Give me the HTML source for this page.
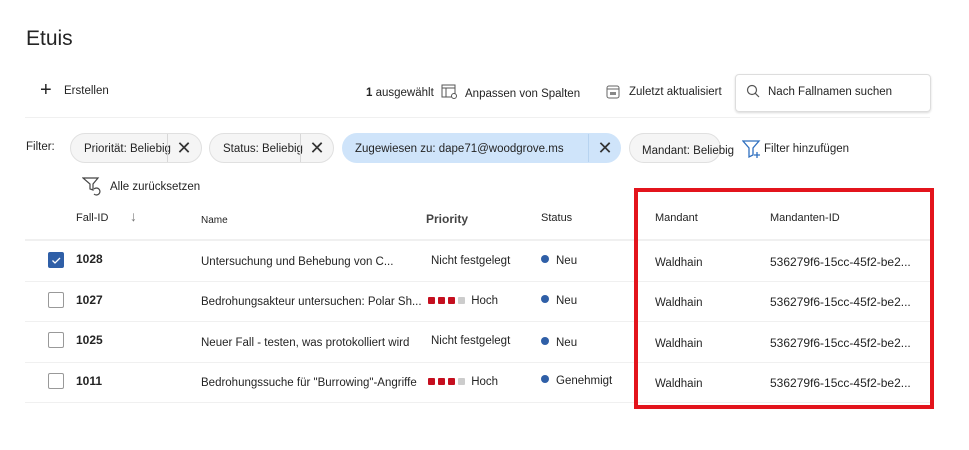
<!DOCTYPE html>
<html><head><meta charset="utf-8"><style>
body{margin:0;width:969px;height:450px;background:#fff;font-family:"Liberation Sans",sans-serif;color:#242424;position:relative;overflow:hidden}
.a{position:absolute;white-space:nowrap}
.t{font-size:11.5px}
.chip{position:absolute;height:30px;top:133px;border:1px solid #e0e0e0;background:#f5f5f5;border-radius:15px;font-size:11.5px;box-sizing:border-box;line-height:30px;white-space:nowrap}
.x{position:absolute;top:0;height:28px;border-left:1px solid #d8d8d8;width:32px;text-align:center;font-size:18px;line-height:28px;color:#333}
.line{position:absolute;left:25px;width:905px;height:1px;background:#f0f0f0}
.cb{position:absolute;left:48px;width:14px;height:14px;border:1px solid #999;border-radius:2px;background:#fff}
.dot{display:inline-block;width:8px;height:8px;border-radius:50%;background:#2f5fa7;margin-right:7px;vertical-align:1px}
.sq{display:inline-block;width:7px;height:7px;background:#c50f1f;margin-right:3px;border-radius:1px}
.id{font-weight:bold;font-size:12px}
</style></head><body>
<div class="a" style="left:26px;top:27px;font-size:21px">Etuis</div>
<div class="a" style="left:40px;top:80px;font-size:20px;line-height:20px;font-weight:300">+</div>
<div class="a t" style="left:64px;top:85px">Erstellen</div>
<div class="a t" style="left:366px;top:87px"><b>1</b> ausgewählt</div>
<svg class="a" style="left:441px;top:84px" width="17" height="16"><rect x="1" y="1" width="13" height="12" fill="none" stroke="#555"/><line x1="1" y1="4" x2="14" y2="4" stroke="#555"/><line x1="5" y1="4" x2="5" y2="13" stroke="#555"/><circle cx="13" cy="12" r="2.5" fill="#fff" stroke="#555"/></svg>
<div class="a t" style="left:465px;top:88px">Anpassen von Spalten</div>
<svg class="a" style="left:606px;top:85px" width="14" height="14"><rect x="1" y="1" width="12" height="12" rx="2" fill="none" stroke="#666"/><line x1="1" y1="4" x2="13" y2="4" stroke="#666"/><rect x="4" y="7" width="6" height="3" fill="#888"/></svg>
<div class="a t" style="left:629px;top:86px">Zuletzt aktualisiert</div>
<div class="a" style="left:735px;top:74px;width:194px;height:36px;border:1px solid #ddd;border-radius:4px;box-shadow:0 1px 2px rgba(0,0,0,.15)"></div>
<svg class="a" style="left:746px;top:84px" width="14" height="14"><circle cx="6" cy="6" r="4.5" fill="none" stroke="#555" stroke-width="1.2"/><line x1="9.3" y1="9.3" x2="13" y2="13" stroke="#555" stroke-width="1.2"/></svg>
<div class="a t" style="left:768px;top:86px">Nach Fallnamen suchen</div>
<div class="line" style="top:117px"></div>
<div class="a t" style="left:26px;top:141px">Filter:</div>
<div class="chip" style="left:70px;width:132px;padding-left:13px">Priorität: Beliebig<div class="x" style="left:96px">✕</div></div>
<div class="chip" style="left:209px;width:125px;padding-left:13px">Status: Beliebig<div class="x" style="left:90px">✕</div></div>
<div class="chip" style="left:342px;width:279px;padding-left:12px;background:#cfe4fa;border-color:#cfe4fa">Zugewiesen zu: dape71@woodgrove.ms<div class="x" style="left:245px;border-color:#b7d3f0">✕</div></div>
<div class="chip" style="left:629px;width:92px;padding-left:12px;overflow:visible;line-height:34px">Mandant: Beliebig</div>
<svg class="a" style="left:742px;top:140px" width="20" height="19"><path d="M1 1h16l-6 7v7l-4 2V8z" fill="none" stroke="#2f6fbf" stroke-width="1.3"/><path d="M15 12v6M12 15h6" stroke="#2f6fbf" stroke-width="1.3"/></svg>
<div class="a t" style="left:764px;top:143px">Filter hinzufügen</div>
<svg class="a" style="left:82px;top:177px" width="20" height="19"><path d="M1 1h15l-5 6v6l-3-1V7z" fill="none" stroke="#444" stroke-width="1.2"/><path d="M12 12a3.5 3.5 0 1 1 0 5" fill="none" stroke="#444" stroke-width="1.2"/></svg>
<div class="a t" style="left:110px;top:181px">Alle zurücksetzen</div>
<div class="a" style="left:76px;top:212px;font-size:11px">Fall-ID</div>
<div class="a" style="left:130px;top:208px;font-size:14px;color:#777">↓</div>
<div class="a" style="left:201px;top:215px;font-size:10px">Name</div>
<div class="a" style="left:426px;top:212px;font-size:12px;font-weight:bold;color:#444">Priority</div>
<div class="a" style="left:541px;top:212px;font-size:11px">Status</div>
<div class="a" style="left:655px;top:212px;font-size:11px">Mandant</div>
<div class="a" style="left:770px;top:212px;font-size:11px">Mandanten-ID</div>
<div class="line" style="top:239px;height:2px"></div>
<div class="line" style="top:281px"></div>
<div class="line" style="top:321px"></div>
<div class="line" style="top:362px"></div>
<div class="line" style="top:402px"></div>
<div class="cb" style="top:252px;background:#2f5fa7;border-color:#2f5fa7"><svg width="14" height="14"><path d="M3.5 7.5l2.5 2.5 5-5" fill="none" stroke="#fff" stroke-width="1.3"/></svg></div>
<div class="cb" style="top:292px"></div>
<div class="cb" style="top:332px"></div>
<div class="cb" style="top:373px"></div>
<div class="a id" style="left:76px;top:252px">1028</div>
<div class="a id" style="left:76px;top:293px">1027</div>
<div class="a id" style="left:76px;top:333px">1025</div>
<div class="a id" style="left:76px;top:374px">1011</div>
<div class="a t" style="left:201px;top:256px">Untersuchung und Behebung von C...</div>
<div class="a t" style="left:201px;top:296px">Bedrohungsakteur untersuchen: Polar Sh...</div>
<div class="a t" style="left:201px;top:337px">Neuer Fall - testen, was protokolliert wird</div>
<div class="a t" style="left:201px;top:377px">Bedrohungssuche für "Burrowing"-Angriffe</div>
<div class="a t" style="left:431px;top:255px">Nicht festgelegt</div>
<div class="a t" style="left:428px;top:295px"><span class="sq"></span><span class="sq"></span><span class="sq"></span><span class="sq" style="background:#ccc"></span> Hoch</div>
<div class="a t" style="left:431px;top:335px">Nicht festgelegt</div>
<div class="a t" style="left:428px;top:376px"><span class="sq"></span><span class="sq"></span><span class="sq"></span><span class="sq" style="background:#ccc"></span> Hoch</div>
<div class="a t" style="left:541px;top:255px"><span class="dot"></span>Neu</div>
<div class="a t" style="left:541px;top:295px"><span class="dot"></span>Neu</div>
<div class="a t" style="left:541px;top:337px"><span class="dot"></span>Neu</div>
<div class="a t" style="left:541px;top:375px"><span class="dot"></span>Genehmigt</div>
<div class="a t" style="left:655px;top:257px">Waldhain</div>
<div class="a t" style="left:655px;top:297px">Waldhain</div>
<div class="a t" style="left:655px;top:338px">Waldhain</div>
<div class="a t" style="left:655px;top:378px">Waldhain</div>
<div class="a t" style="left:770px;top:255px;font-size:12px">536279f6-15cc-45f2-be2...</div>
<div class="a t" style="left:770px;top:295px;font-size:12px">536279f6-15cc-45f2-be2...</div>
<div class="a t" style="left:770px;top:336px;font-size:12px">536279f6-15cc-45f2-be2...</div>
<div class="a t" style="left:770px;top:376px;font-size:12px">536279f6-15cc-45f2-be2...</div>
<div class="a" style="left:634px;top:188px;width:292px;height:213px;border:4px solid #e3141c"></div>
</body></html>
